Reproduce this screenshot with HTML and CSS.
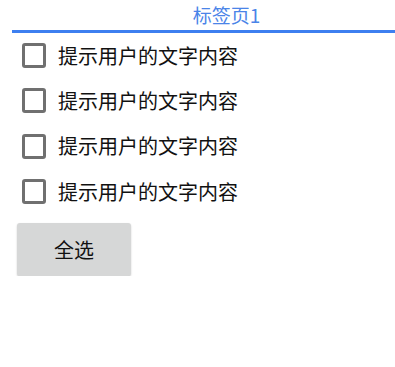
FILE: index.html
```html
<!DOCTYPE html>
<html lang="zh-CN">

<head>
    <meta charset="UTF-8">
    <meta name="viewport" content="width=device-width, initial-scale=1.0">
    <title>Document</title>
    <link rel="stylesheet" href="styles.css">
</head>

<body>
    <div class="tabs">
        <div class="tab active">标签页1</div>
    </div>
    <div class="list">
        <label class="row"><span class="box"></span><span class="txt">提示用户的文字内容</span></label>
        <label class="row"><span class="box"></span><span class="txt">提示用户的文字内容</span></label>
        <label class="row"><span class="box"></span><span class="txt">提示用户的文字内容</span></label>
        <label class="row"><span class="box"></span><span class="txt">提示用户的文字内容</span></label>
    </div>
    <div class="btn-wrap">
        <div class="btn">全选</div>
    </div>
</body>

</html>
```

FILE: styles.css
```css
* {
    margin: 0;
    padding: 0;
    box-sizing: border-box;
}

body {
    background-color: #fff;
    font-family: "Noto Sans CJK SC", "Noto Sans", sans-serif;
    color: #111;
}

.tabs {
    margin-left: 12px;
}

.tab {
    height: 33px;
    line-height: 30px;
    padding-left: 46px;
    font-size: 19px;
    text-align: center;
    color: #4a84e8;
    border-bottom: 3px solid #3d7ff0;
}

.list {
    display: flex;
    flex-direction: column;
}

.row {
    height: 45.33px;
    display: flex;
    align-items: center;
    padding-left: 22px;
}

.box {
    width: 24px;
    height: 25px;
    border: 3px solid #707070;
    border-radius: 3px;
    margin-right: 12px;
}

.txt {
    font-size: 20px;
    line-height: 24px;
}

.btn-wrap {
    padding: 9px 0 0 17px;
}

.btn {
    width: 114px;
    height: 53px;
    line-height: 53px;
    text-align: center;
    font-size: 20px;
    background-color: #d6d7d7;
    border-radius: 3px;
    box-shadow: 0 1px 2px rgba(0, 0, 0, .2);
}
```
